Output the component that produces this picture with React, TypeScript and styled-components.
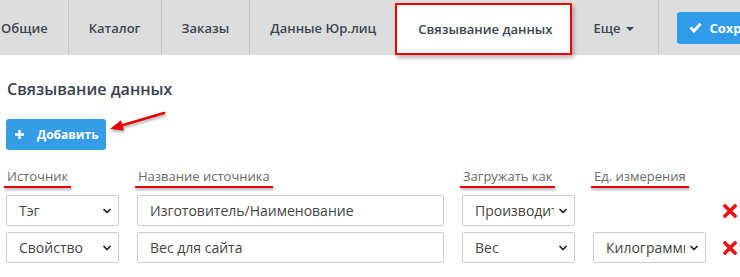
import React from 'react';
import styled, { createGlobalStyle } from 'styled-components';
import { ChevronDown } from 'lucide-react';

const GlobalStyle = createGlobalStyle`
  html, body {
    margin: 0;
    padding: 0;
    background: #fff;
    font-family: 'Open Sans', 'Liberation Sans', sans-serif;
    overflow: hidden;
  }
  * { box-sizing: border-box; }
`;

type Row = {
  source: string;
  name: string;
  loadAs: string;
  unit?: string;
};

const tabs = ['Общие', 'Каталог', 'Заказы', 'Данные Юр.лиц'];

const rows: Row[] = [
  { source: 'Тэг', name: 'Изготовитель/Наименование', loadAs: 'Производитель' },
  { source: 'Свойство', name: 'Вес для сайта', loadAs: 'Вес', unit: 'Килограммы' },
];

const Select: React.FC<{ value: string }> = ({ value }) => (
  <SelectWrap>
    <SelectBox value={value} onChange={() => {}}>
      <option>{value}</option>
    </SelectBox>
    <Chevron size={12} strokeWidth={3.5} />
  </SelectWrap>
);

const RemoveIcon = () => (
  <RemoveButton type="button">
    <svg width="14" height="14" viewBox="0 0 14 14">
      <path d="M2 2 L12 12 M12 2 L2 12" stroke="#ee1111" strokeWidth="3.6" strokeLinecap="square" />
    </svg>
  </RemoveButton>
);

const App: React.FC = () => {
  return (
    <>
      <GlobalStyle />
      <TabBar>
        {tabs.map((t) => (
          <Tab key={t}>{t}</Tab>
        ))}
        <ActiveTab>Связывание данных</ActiveTab>
        <Tab>
          Еще <Caret />
        </Tab>
        <SaveArea>
          <SaveButton>
            <svg width="13" height="11" viewBox="0 0 13 11">
              <path d="M1.5 5.5 L5 9 L11.5 1.8" stroke="#fff" strokeWidth="2.8" fill="none" />
            </svg>
            Сохранить
          </SaveButton>
        </SaveArea>
      </TabBar>

      <Content>
        <Title>Связывание данных</Title>
        <ButtonRow>
          <AddButton>
            <svg width="9" height="9" viewBox="0 0 9 9">
              <path d="M4.5 0 V9 M0 4.5 H9" stroke="#fff" strokeWidth="2.4" />
            </svg>
            Добавить
          </AddButton>
          <Arrow width="62" height="26" viewBox="0 0 62 26">
            <path d="M58 3 L16.4 15.2" stroke="#e60000" strokeWidth="2.6" strokeLinecap="round" />
            <path d="M4 19 L17.9 20.5 L15 10.2 Z" fill="#e60000" />
          </Arrow>
        </ButtonRow>

        <Grid>
          <Label><Marked>Источник</Marked></Label>
          <Label><Marked>Название источника</Marked></Label>
          <Label><Marked>Загружать как</Marked></Label>
          <Label><Marked>Ед. измерения</Marked></Label>
          <span />
        </Grid>

        <Rows>
          {rows.map((r) => (
            <Grid key={r.name}>
              <Select value={r.source} />
              <TextInput value={r.name} onChange={() => {}} />
              <Select value={r.loadAs} />
              {r.unit ? <Select value={r.unit} /> : <span />}
              <RemoveIcon />
            </Grid>
          ))}
        </Rows>
      </Content>
    </>
  );
};

const TabBar = styled.nav`
  display: flex;
  align-items: stretch;
  height: 55px;
  margin-left: -19px;
  background: #dddddd;
  white-space: nowrap;
`;

const Tab = styled.div`
  display: flex;
  align-items: center;
  gap: 5px;
  padding: 0 20px;
  border-right: 1px solid #c6c7c9;
  color: #3c4650;
  font-size: 13px;
  font-weight: 600;

  &:nth-child(4) {
    border-right: none;
    padding-right: 19px;
  }
  &:nth-child(6) {
    border-right: 1px solid #c6c7c9;
    padding: 0 24px 0 22px;
  }
`;

const ActiveTab = styled.div`
  display: flex;
  align-items: center;
  margin-top: 3px;
  padding: 0 17px 0 21px;
  background: #fff;
  border: 2px solid #ee0000;
  box-shadow: 2px 3px 4px rgba(0, 0, 0, 0.28);
  color: #3c4650;
  font-size: 13px;
  font-weight: 600;
  position: relative;
  z-index: 1;
`;

const Caret = styled.span`
  display: inline-block;
  border-left: 4px solid transparent;
  border-right: 4px solid transparent;
  border-top: 4px solid #3c4650;
  margin-top: 2px;
`;

const SaveArea = styled.div`
  display: flex;
  align-items: center;
  padding-left: 18px;
`;

const SaveButton = styled.button`
  display: flex;
  align-items: center;
  gap: 8px;
  height: 32px;
  padding: 0 12px;
  border: none;
  border-radius: 3px;
  background: #2f9bea;
  color: #fff;
  font-family: inherit;
  font-size: 13px;
  font-weight: 700;
`;

const Content = styled.main`
  padding: 23px 6px 0;
`;

const Title = styled.h2`
  margin: 0 0 0 1px;
  font-size: 16px;
  line-height: 22px;
  font-weight: 600;
  color: #38424c;
`;

const ButtonRow = styled.div`
  position: relative;
  margin-top: 19px;
  height: 31px;
`;

const AddButton = styled.button`
  display: flex;
  align-items: center;
  gap: 13px;
  width: 100px;
  height: 31px;
  padding: 0 0 0 9px;
  border: none;
  border-radius: 3px;
  background: #339de8;
  color: #fff;
  font-family: inherit;
  font-size: 12px;
  font-weight: 700;
`;

const Arrow = styled.svg`
  position: absolute;
  left: 100px;
  top: -9px;
  filter: drop-shadow(1px 2px 1px rgba(0, 0, 0, 0.3));
`;

const Grid = styled.div`
  display: grid;
  grid-template-columns: 113px 307px 113px 113px 14px;
  column-gap: 18px;
  align-items: center;
`;

const Label = styled.div`
  margin-top: 17px;
  height: 18px;
  font-size: 13px;
  line-height: 18px;
  color: #6a6a6a;
  padding-left: 1px;
`;

const Marked = styled.span`
  position: relative;
  display: inline-block;

  &::after {
    content: '';
    position: absolute;
    left: -3px;
    right: -3px;
    bottom: -3px;
    height: 2px;
    background: #e60000;
    filter: drop-shadow(1px 2px 1px rgba(0, 0, 0, 0.35));
  }
`;

const Rows = styled.div`
  display: flex;
  flex-direction: column;
  gap: 6px;
  margin-top: 10px;
`;

const SelectWrap = styled.div`
  position: relative;
  height: 31px;
`;

const SelectBox = styled.select`
  appearance: none;
  width: 100%;
  height: 31px;
  padding: 0 20px 0 12px;
  border: 1px solid #cccccc;
  border-radius: 2px;
  background: #fff;
  color: #444;
  font-family: inherit;
  font-size: 14px;
  outline: none;
`;

const Chevron = styled(ChevronDown)`
  position: absolute;
  right: 6px;
  top: 10px;
  color: #222;
  pointer-events: none;
`;

const TextInput = styled.input`
  height: 31px;
  width: 100%;
  padding: 0 12px;
  border: 1px solid #cccccc;
  border-radius: 2px;
  color: #444;
  font-family: inherit;
  font-size: 14px;
  outline: none;
`;

const RemoveButton = styled.button`
  display: flex;
  padding: 0;
  margin-left: -1px;
  border: none;
  background: none;
`;

export default App;
